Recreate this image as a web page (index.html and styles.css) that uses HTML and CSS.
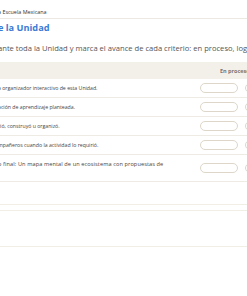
FILE: index.html
```html
<!DOCTYPE html>
<html lang="es">
<head>
<meta charset="utf-8">
<title>Lista de cotejo</title>
<link rel="stylesheet" href="styles.css">
</head>
<body>
<div class="page">
  <header class="topbar">a Escuela Mexicana</header>
  <h1 class="title">e la Unidad</h1>
  <p class="intro">ante toda la Unidad y marca el avance de cada criterio: en proceso, logrado o destacado.</p>
  <div class="table">
    <div class="row head">
      <div class="crit"></div>
      <div class="col col-h">En proceso</div>
      <div class="col col-h">Logrado</div>
    </div>
    <div class="row">
      <div class="crit"><span>a organizador interactivo de esta Unidad.</span></div>
      <div class="col"><span class="pill"></span></div>
      <div class="col"><span class="pill"></span></div>
    </div>
    <div class="row">
      <div class="crit"><span>ación de aprendizaje planteada.</span></div>
      <div class="col"><span class="pill"></span></div>
      <div class="col"><span class="pill"></span></div>
    </div>
    <div class="row">
      <div class="crit"><span>rió, construyó u organizó.</span></div>
      <div class="col"><span class="pill"></span></div>
      <div class="col"><span class="pill"></span></div>
    </div>
    <div class="row">
      <div class="crit"><span>mpañeros cuando la actividad lo requirió.</span></div>
      <div class="col"><span class="pill"></span></div>
      <div class="col"><span class="pill"></span></div>
    </div>
    <div class="row tall">
      <div class="crit wide"><span>o final: Un mapa mental de un ecosistema con propuestas de conservación.</span></div>
      <div class="col"><span class="pill"></span></div>
      <div class="col"><span class="pill"></span></div>
    </div>
  </div>
  <div class="notes">
    <div class="notes-head"></div>
    <div class="notes-body"></div>
  </div>
</div>
</body>
</html>
```
FILE: styles.css
```css
html, body {
  margin: 0;
  padding: 0;
  background: #ffffff;
  overflow: hidden;
}
body {
  font-family: "Open Sans", "Liberation Sans", sans-serif;
  color: #444;
}
.page {
  width: 520px;
  margin-left: -2px;
}
.topbar {
  font-size: 5.4px;
  line-height: 6px;
  color: #333;
  padding: 9px 0 3px;
  border-bottom: 1px solid #ece9e3;
}
.title {
  margin: 3px 0 0;
  font-size: 9.2px;
  line-height: 12px;
  font-weight: 700;
  color: #3a7bd5;
}
.intro {
  margin: 9px 0 0;
  font-size: 7.6px;
  line-height: 10px;
  color: #555;
  white-space: nowrap;
}
.table {
  margin-top: 9px;
  display: flex;
  flex-direction: column;
}
.row {
  display: grid;
  grid-template-columns: 198px 45px 45px;
  align-items: center;
  border-bottom: 1px solid #eeebe4;
  min-height: 18px;
}
.row.head {
  background: #f3f0ea;
  border-bottom: none;
  min-height: 17px;
}
.row.tall {
  min-height: 26px;
}
.crit {
  font-size: 5.2px;
  line-height: 8px;
  color: #444;
  margin-left: -60px;
  padding-right: 12px;
  text-indent: 60px;
}
.crit.wide {
  font-size: 5.6px;
  letter-spacing: 0.1px;
}
.col {
  display: flex;
  justify-content: center;
}
.col-h {
  font-size: 5.5px;
  font-weight: 700;
  color: #777;
  justify-content: flex-start;
  padding-left: 24px;
  white-space: nowrap;
}
.pill {
  display: block;
  width: 38px;
  height: 10px;
  box-sizing: border-box;
  border: 1px solid #ddd6c9;
  border-radius: 5px;
  background: #fff;
}
.notes {
  margin-top: 22px;
}
.notes-head {
  height: 5px;
  border-top: 1px solid #f1eee6;
  border-bottom: 1px solid #f1eee6;
}
.notes-body {
  height: 35px;
  border-bottom: 1px solid #f1eee6;
}
```
